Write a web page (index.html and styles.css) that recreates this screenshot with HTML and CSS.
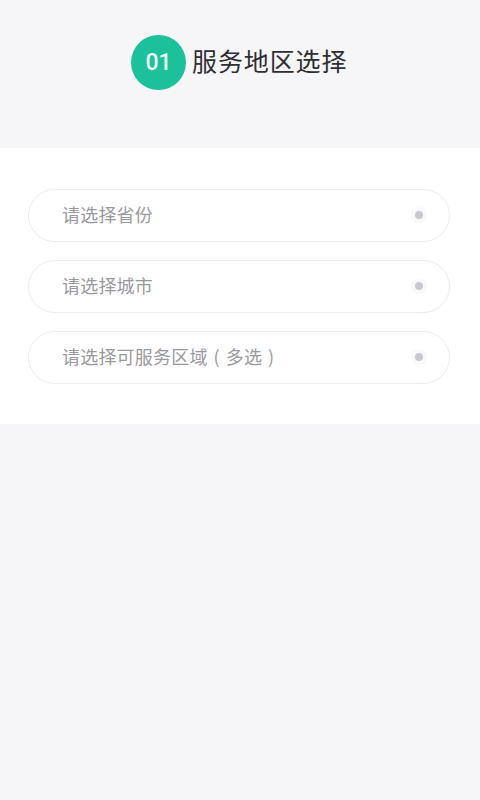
FILE: index.html
```html
<!DOCTYPE html>
<html>
<head>
    <meta charset="utf-8">
    <title>服务地区选择</title>
    <link rel="stylesheet" href="styles.css">
</head>
<body>
    <div class="header">
        <div class="step-badge">01</div>
        <div class="step-title">服务地区选择</div>
    </div>

    <div class="panel">
        <div class="select-row">
            <span class="select-label">请选择省份</span>
            <span class="select-dot"></span>
        </div>
        <div class="select-row">
            <span class="select-label">请选择城市</span>
            <span class="select-dot"></span>
        </div>
        <div class="select-row">
            <span class="select-label">请选择可服务区域 ( 多选 )</span>
            <span class="select-dot"></span>
        </div>
    </div>
</body>
</html>
```

FILE: styles.css
```css
html, body {
    height: 100%;
}

body {
    margin: 0;
    background: #f6f5f8;
    font-family: "Noto Sans CJK SC", "Noto Sans", sans-serif;
}

.header {
    height: 148px;
    box-sizing: border-box;
    padding: 35px 0 0 131px;
    display: flex;
    align-items: flex-start;
    gap: 6px;
}

.step-badge {
    width: 55px;
    height: 55px;
    border-radius: 50%;
    background: #1cc09a;
    color: #e8fbf6;
    font-family: Roboto, sans-serif;
    font-size: 23px;
    font-weight: 500;
    line-height: 56px;
    text-align: center;
}

.step-title {
    font-size: 25px;
    line-height: 50px;
    letter-spacing: 0.9px;
    color: #2f2e33;
}

.panel {
    background: #fff;
    height: 276px;
    box-sizing: border-box;
    padding: 41px 30px 0 28px;
    display: flex;
    flex-direction: column;
    gap: 18px;
}

.select-row {
    height: 53px;
    box-sizing: border-box;
    border: 1px solid #ebeaee;
    border-radius: 27px;
    padding: 0 26px 0 34px;
    display: flex;
    align-items: center;
    justify-content: space-between;
}

.select-label {
    font-size: 18px;
    letter-spacing: 0.2px;
    word-spacing: 1.7px;
    color: #9a999e;
    margin-left: -1px;
    padding-bottom: 4px;
}

.select-dot {
    width: 8px;
    height: 8px;
    border-radius: 50%;
    background: #c9c8cd;
    box-shadow: 0 0 0 4px #f9f8fa;
    margin-bottom: 1px;
}
```
